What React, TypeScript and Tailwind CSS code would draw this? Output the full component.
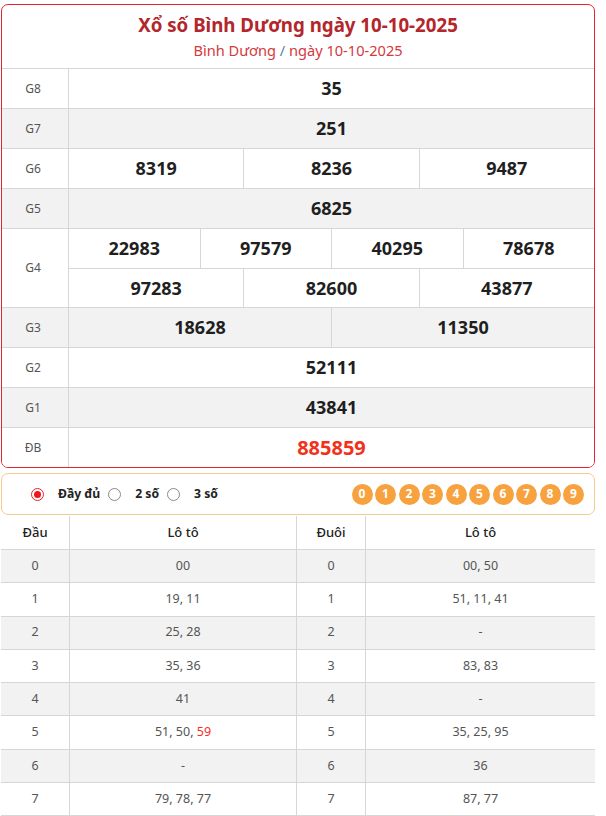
import React from 'react';

const giai = [
  { label: 'G8', rows: [['35']] },
  { label: 'G7', rows: [['251']] },
  { label: 'G6', rows: [['8319', '8236', '9487']] },
  { label: 'G5', rows: [['6825']] },
  { label: 'G4', rows: [['22983', '97579', '40295', '78678'], ['97283', '82600', '43877']] },
  { label: 'G3', rows: [['18628', '11350']] },
  { label: 'G2', rows: [['52111']] },
  { label: 'G1', rows: [['43841']] },
  { label: 'ĐB', rows: [['885859']] },
];

// đầu / đuôi
const loto = [
  ['0', ['00'], '0', '00, 50'],
  ['1', ['19, 11'], '1', '51, 11, 41'],
  ['2', ['25, 28'], '2', '-'],
  ['3', ['35, 36'], '3', '83, 83'],
  ['4', ['41'], '4', '-'],
  ['5', ['51, 50, ', '59'], '5', '35, 25, 95'],
  ['6', ['-'], '6', '36'],
  ['7', ['79, 78, 77'], '7', '87, 77'],
] as const;

const App = () => {
  return (
    <div className="w-[606px] min-h-[816px] bg-white font-['Noto_Sans','Open_Sans',sans-serif] overflow-hidden">
      {/* Kết quả */}
      <div className="ml-px mt-1 w-[594px] border border-[#e3262d] rounded-[7px] overflow-hidden">
        <div className="h-[63px] flex flex-col items-center pt-[7px]">
          <h1 className="text-[18.7px] leading-[26px] font-bold text-[#b3262b]">Xổ số Bình Dương ngày 10-10-2025</h1>
          <p className="text-[14.6px] leading-[20px] mt-[2px] text-[#d5393e]">
            Bình Dương <span className="text-[#5b7fa8]">/</span> ngày 10-10-2025
          </p>
        </div>
        {giai.map((g, i) => (
          <div key={g.label} className={`flex border-t border-[#d6d6d6] ${i % 2 === 1 ? 'bg-[#f2f2f2]' : 'bg-white'}`}>
            <div className="w-[67px] shrink-0 border-r border-[#d6d6d6] flex items-center justify-center pr-[4px] text-[12px] text-[#555]">
              {g.label}
            </div>
            <div className="flex-1 flex flex-col">
              {g.rows.map((r, ri) => (
                <div key={ri} className={`flex h-[39px] ${ri > 0 ? 'border-t border-[#d6d6d6]' : ''}`}>
                  {r.map((n, ni) => (
                    <div
                      key={ni}
                      className={`flex-1 flex items-center justify-center font-bold ${ni > 0 ? 'border-l border-[#d6d6d6]' : ''} ${
                        g.label === 'ĐB' ? 'text-[20px] text-[#f2311b]' : 'text-[18px] text-[#1f1f1f]'
                      }`}
                    >
                      {n}
                    </div>
                  ))}
                </div>
              ))}
            </div>
          </div>
        ))}
      </div>

      {/* Chọn kiểu hiển thị */}
      <div className="ml-px mt-[5px] w-[594px] h-[42px] border border-[#f6c98e] rounded-[7px] flex items-center pl-[29px] pr-[10px]">
        <span className="w-[13px] h-[13px] rounded-full border border-[#e3262d] flex items-center justify-center">
          <span className="w-[7px] h-[7px] rounded-full bg-[#f0141e]" />
        </span>
        <span className="ml-[14px] text-[12.2px] font-bold text-[#222]">Đầy đủ</span>
        <span className="ml-[8px] w-[13px] h-[13px] rounded-full border border-[#8a8a8a]" />
        <span className="ml-[14px] text-[12.2px] font-bold text-[#222]">2 số</span>
        <span className="ml-[8px] w-[13px] h-[13px] rounded-full border border-[#8a8a8a]" />
        <span className="ml-[14px] text-[12.2px] font-bold text-[#222]">3 số</span>
        <div className="ml-auto flex gap-[2.5px]">
          {['0', '1', '2', '3', '4', '5', '6', '7', '8', '9'].map((d) => (
            <span key={d} className="w-[21px] h-[21px] rounded-full bg-[#f7a13f] text-white text-[12px] font-bold flex items-center justify-center">
              {d}
            </span>
          ))}
        </div>
      </div>

      {/* Lô tô */}
      <div className="mt-px ml-px w-[594px] text-[12.5px] text-[#555]">
        <div className="grid grid-cols-[69px_227px_69px_229px] h-[34px] border-b border-[#d6d6d6] text-[13px] text-[#222] font-medium">
          <div className="flex items-center justify-center border-r border-[#d6d6d6]">Đầu</div>
          <div className="flex items-center justify-center border-r border-[#d6d6d6]">Lô tô</div>
          <div className="flex items-center justify-center border-r border-[#d6d6d6]">Đuôi</div>
          <div className="flex items-center justify-center">Lô tô</div>
        </div>
        {loto.map((r, i) => (
          <div
            key={r[0]}
            className={`grid grid-cols-[69px_227px_69px_229px] h-[33.3px] border-b border-[#d6d6d6] ${i % 2 === 0 ? 'bg-[#f2f2f2]' : 'bg-white'}`}
          >
            <div className="flex items-center justify-center border-r border-[#d6d6d6]">{r[0]}</div>
            <div className="flex items-center justify-center border-r border-[#d6d6d6] whitespace-pre">
              {r[1][0]}
              {r[1][1] && <span className="text-[#f2311b]">{r[1][1]}</span>}
            </div>
            <div className="flex items-center justify-center border-r border-[#d6d6d6]">{r[2]}</div>
            <div className="flex items-center justify-center">{r[3]}</div>
          </div>
        ))}
      </div>
    </div>
  );
};

export default App;
